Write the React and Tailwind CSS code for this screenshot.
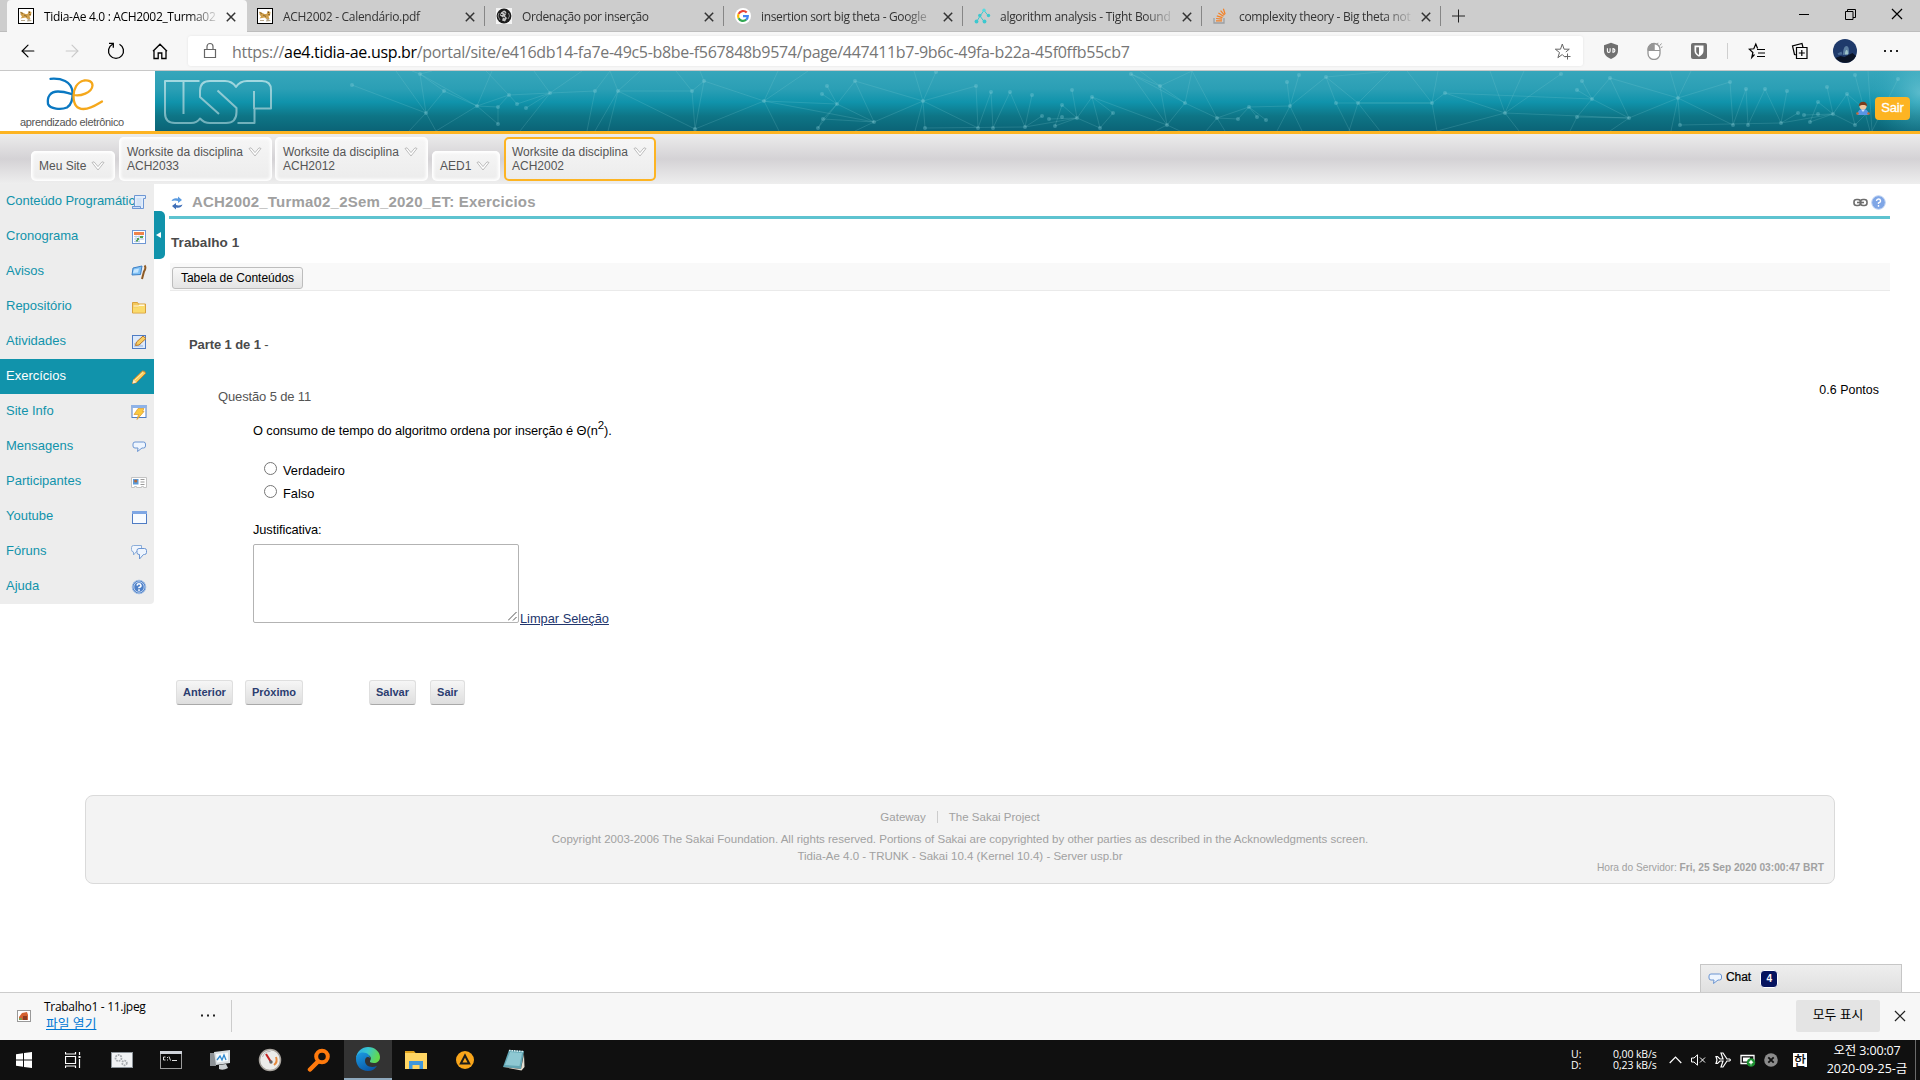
import React from "react";
import { ArrowLeft, ArrowRight } from "lucide-react";

const ui = "font-['Open_Sans','Noto_Sans_CJK_KR',sans-serif]";

/* ---------- favicons ---------- */
const Cat = () => (
  <svg width="16" height="16" viewBox="0 0 16 16">
    <rect x="0.5" y="0.5" width="15" height="15" fill="#fff" stroke="#000" />
    <path d="M2.500 3.500l3 1.500 2 1 2 0 1.500-3 2.500 1-.5 3.500-1.500 1 1 2.500h-3l-2-1.500-2.500.5-2.500.5 1.500-2-1.500-2z" fill="#cf9f4c" />
    <path d="M2.500 4.500l2.500 1M6 7l3 1.500" stroke="#7d5a22" strokeWidth="0.800" fill="none" />
    <path d="M11 3.500l.5 1.500M12.500 6l-1 1" stroke="#5d3d12" fill="none" />
    <path d="M10 10l4 3-5 .5zM3 12h4v1H3z" fill="#b9a98c" />
  </svg>
);
const Gnu = () => (
  <svg width="16" height="16" viewBox="0 0 16 16">
    <rect width="16" height="16" fill="#f4f4f4" />
    <circle cx="8" cy="8" r="7.4" fill="#1c1c1c" />
    <path d="M8 2.500c2 .5 3 2 2 3.500l-1 2 2 2-2 3.500-3-1 1-3-3-2 1-3z" fill="#c4c4c4" />
    <path d="M7.500 4.500l2 1M7 9l2 1M5 6.500h1.500" stroke="#222" />
    <path d="M3 5l-1 3 2 4M12.500 5l1 3-1.500 3" stroke="#888" fill="none" />
  </svg>
);
const Google = () => (
  <svg width="16" height="16" viewBox="0 0 16 16">
    <circle cx="8" cy="8" r="8" fill="#fff" />
    <g fill="none" strokeWidth="2.200">
      <path d="M11.700 4.600A4.900 4.900 0 0 0 3.600 5.900" stroke="#ea4335" />
      <path d="M3.600 5.900a4.900 4.900 0 0 0 0 4.300" stroke="#fbbc05" />
      <path d="M3.600 10.200a4.900 4.900 0 0 0 7.600 1.500" stroke="#34a853" />
      <path d="M11.200 11.700A4.900 4.900 0 0 0 12.800 8.200H8" stroke="#4285f4" />
    </g>
  </svg>
);
const CsSite = () => (
  <svg width="17" height="16" viewBox="0 0 17 16" fill="#3cc8cf" stroke="#3cc8cf">
    <path d="M10 2.500L6 8 2.500 14M6 8l4 5.500M10 2.500L14.500 8" fill="none" strokeWidth="1" />
    <circle cx="10" cy="2.200" r="1.700" stroke="none" fill="#58dbe0" />
    <circle cx="5.800" cy="7.500" r="1.700" stroke="none" />
    <circle cx="14.500" cy="7.500" r="1.700" stroke="none" />
    <circle cx="2.500" cy="13.500" r="1.900" stroke="none" />
    <circle cx="10.500" cy="13.500" r="1.900" stroke="none" />
  </svg>
);
const Stack = () => (
  <svg width="14" height="16" viewBox="0 0 14 16" fill="none">
    <path d="M1 10v5h10v-5" stroke="#9c9fa2" strokeWidth="1.300" />
    <path d="M3 12.800h6M3.100 10.500l6 .6M3.800 7.900l5.700 1.700M5.400 5l5.100 3.200M7.600 2.600l3.800 4.500M10.400.8l1.700 5.500" stroke="#f48024" strokeWidth="1.200" />
  </svg>
);

const fade = "[mask-image:linear-gradient(to_right,#000_144px,transparent_176px)]";
const tabs = [
  { t: "Tidia-Ae 4.0 : ACH2002_Turma02", i: <Cat />, on: true, ls: "tracking-[-0.33px]" },
  { t: "ACH2002 - Calendário.pdf", i: <Cat />, ls: "tracking-[-0.3px]" },
  { t: "Ordenação por inserção", i: <Gnu />, ls: "tracking-[-0.38px]" },
  { t: "insertion sort big theta - Google", i: <Google />, ls: "tracking-[-0.35px]" },
  { t: "algorithm analysis - Tight Bound", i: <CsSite />, ls: "tracking-[-0.28px]" },
  { t: "complexity theory - Big theta not", i: <Stack />, ls: "tracking-[-0.33px]" },
];

const Cross = ({ s = 10, w = 1.5, c = "#333" }) => (
  <svg width={s} height={s} viewBox="0 0 10 10" stroke={c} strokeWidth={w}>
    <path d="M.8.8l8.400 8.400M9.200.8L.8 9.200" />
  </svg>
);

function TabStrip() {
  return (
    <div className="flex h-8 border-b border-[#bdbdbd] bg-[#cdcdcd] pl-[7px]">
      {tabs.map((tab, i) => (
        <div
          key={i}
          className={
            tab.on
              ? "-mb-px -mr-px flex h-8 w-[240px] shrink-0 items-center rounded-t-[4px] bg-[#f7f7f7] pl-[11px]"
              : "flex h-8 w-[239px] shrink-0 items-center pl-[11px]"
          }
        >
          <div className="flex w-[26px] shrink-0">{tab.i}</div>
          <div className={`mt-px w-[176px] shrink-0 whitespace-nowrap text-[12px] leading-[18px] ${tab.ls} ${tab.on ? "text-black" : "text-[#333]"} ${fade}`}>
            {tab.t}
          </div>
          <div className="ml-[6px] mt-px flex shrink-0"><Cross /></div>
          <div className={`ml-auto h-5 w-px ${i === 0 ? "" : "bg-[#868686]"}`} />
        </div>
      ))}
      <svg className="ml-2.5 mt-[9px]" width="14" height="14" stroke="#222"><path d="M7.500 .5v13M1 7h13" /></svg>
      <div className="ml-auto flex h-7 items-center gap-[35px] pr-[17px]">
        <svg width="11" height="11" stroke="#000"><path d="M0 5.500h10" /></svg>
        <svg width="11" height="11" fill="none" stroke="#000"><path d="M.5 2.500h7.500v8H.5zM2.500 2.500V.5h8v8H8" /></svg>
        <Cross s={12} w={1} c="#000" />
      </div>
    </div>
  );
}

function Toolbar() {
  return (
    <div className="flex h-[39px] items-center border-b border-[#c8c8c8] bg-[#f7f7f7] pl-[18px]">
      <ArrowLeft size={20} strokeWidth={1.400} className="text-black" />
      <ArrowRight size={20} strokeWidth={1.300} className="ml-6 text-[#c9c9c9]" />
      <svg className="ml-[24px]" width="20" height="20" viewBox="0 0 20 20" fill="none" stroke="#000" strokeWidth="1.300">
        <path d="M6.500 3.300A7.500 7.500 0 1 0 13.500 3.300M3 2.300h4.300v4.500" />
      </svg>
      <svg className="ml-[24px]" width="20" height="20" viewBox="0 0 20 20" fill="none" stroke="#000" strokeWidth="1.300">
        <path d="M4 9v8.500h4.200V12h3.600v5.500H16V9M3 10.200L10 3.200 17 10.200" />
      </svg>
      <div className="ml-[18px] flex h-[30px] w-[1395px] items-center rounded-[3px] bg-white pl-[14px] pr-[11px] shadow-[0_0_3px_rgba(0,0,0,0.08)]">
        <svg width="16" height="18" viewBox="0 0 16 18" fill="none" stroke="#666" strokeWidth="1.200">
          <path d="M2.500 7.500h11v8h-11zM5 7.500V4.500a3 3 0 0 1 6 0v3" />
        </svg>
        <div className="ml-[14px] mt-px whitespace-nowrap text-[16px] leading-5 tracking-[-0.315px] text-[#767676]">
          https://<span className="text-black">ae4.tidia-ae.usp.br</span>/portal/site/e416db14-fa7e-49c5-b8be-f567848b9574/page/447411b7-9b6c-49fa-b22a-45f0ffb55cb7
        </div>
        <svg className="ml-auto" width="18" height="18" viewBox="0 0 18 18" fill="none" stroke="#666">
          <path d="M11 15.300L8.300 12.500 3.900 15.700 5.500 10.500 1.300 7.200H6.500L8.300 2l1.800 5.200H15.300L11.800 10M13.500 11.500v6M10.500 14.500h6" />
        </svg>
      </div>
      <svg className="ml-[20px]" width="16" height="18" viewBox="0 0 16 18">
        <path d="M8 .8l7 2.400v5.500c0 4-3 6.500-7 8.300-4-1.800-7-4.300-7-8.300V3.200z" fill="#707070" />
        <path d="M4.400 6.300v3c0 1.400 2.700 1.400 2.700 0v-3M10 6.500a1.900 1.900 0 1 1-.1 3.800z" stroke="#fff" fill="none" strokeWidth="1.100" />
      </svg>
      <svg className="ml-[28px]" width="16" height="18" viewBox="0 0 16 18" fill="none" stroke="#969696">
        <path d="M1 7.500a6 6 0 0 1 12 0v4a6 6 0 0 1-12 0z" fill="#fff" strokeWidth="1.300" />
        <path d="M1 8.500V7a6 6 0 0 1 6-5.500v7z" fill="#969696" />
        <path d="M7 1.500V8.500H13" />
        <path d="M10.500 2l.5-1.200M12.800 3.600L14.500 1.500M14 5.500l1.500-.7" />
      </svg>
      <svg className="ml-[27px]" width="18" height="18" viewBox="0 0 18 18">
        <rect x="1" y="1" width="16" height="16" rx="2" fill="#707070" />
        <path d="M4.500 3.500h9v5.500c0 3-2.500 4.700-4.500 5.800-2-1.100-4.500-2.800-4.500-5.800z" fill="#fff" />
        <path d="M6.200 5.200H9v7.800c-1.700-1-2.800-2.200-2.800-3.800z" fill="#707070" />
      </svg>
      <div className="ml-[19px] h-4 w-px bg-[#cfcfcf]" />
      <svg className="ml-[20px]" width="18" height="18" viewBox="0 0 18 18" fill="none" stroke="#000" strokeWidth="1.200">
        <path d="M6.500 12.500L3.800 15.500 4.900 10.500 1.300 7.200l4.500-.4L7.800 2l1.800 4.500M9 7.500h8M10 11h7M9 14.500h8" />
      </svg>
      <svg className="ml-[25px]" width="18" height="18" viewBox="0 0 18 18" fill="none" stroke="#000" strokeWidth="1.200">
        <path d="M5.500 5.500h10.500v11H5.500zM10.800 8v6M7.800 11h6M5.500 13L3.500 12.500 1.500 4 11 1.500l1 4" />
      </svg>
      <svg className="ml-[24px]" width="24" height="24" viewBox="0 0 24 24">
        <circle cx="12" cy="12" r="12" fill="#1f3a6b" />
        <path d="M2.500 19l5-2 4 1 8-4 3.500 3a12 12 0 0 1-20.500 2z" fill="#0b1426" />
        <path d="M10 16c0-5 1-9 3.500-9s2.500 4 2.500 8z" fill="#5c7ea0" />
        <path d="M12 15.500c0-3 .7-4.500 1.700-4.500s1.300 2 1.300 4.500z" fill="#9fc4c8" />
        <path d="M4.500 14.500l4-2 1 3-4 .5z" fill="#4b6c96" />
      </svg>
      <svg className="ml-[27px]" width="16" height="4" fill="#222"><path d="M0 1h2v2H0zM6 1h2v2H6zM12 1h2v2h-2z" /></svg>
    </div>
  );
}

/* ---------- site banner ---------- */
const nodes = "352,85 426,113 444,91 420,74 477,106 509,95 498,107 517,104 526,108 498,124 550,93 595,91 618,91 692,91 704,81 695,129 764,101 837,104 822,94 827,86 823,119 818,128 855,81 874,122 923,101 925,128 936,72 976,86 991,92 1010,92 1032,95 978,128 993,128 1025,127 1042,116 1049,119 1062,105 1062,117 1055,126 1072,90 1077,118 1092,97 1113,113 1100,128 1131,74 1160,86 1185,103 1167,125 1217,118 1238,119 1249,107 1257,117 1266,120 1287,82 1299,75 1290,106 1326,77 1336,103 1358,103 1432,103 1445,93 1505,113 1561,74 1577,90 1582,81 1592,99 1577,117 1610,78 1629,118 1678,98 1680,125 1730,82 1746,89 1765,89 1787,91 1733,125 1748,125 1781,123 1798,113 1804,115 1818,102 1818,114 1810,122 1827,87 1833,114 1847,94 1855,75 1898,79 1855,125";
const mesh =
  "M352 85L426 113 444 91 420 74 426 113 409 131M396 71L426 113 436 131M412 71L420 74 432 71M444 91L477 106 509 95 498 107 477 106 498 124V107M477 106L436 131M477 106L492 71M420 74L477 106M509 95L486 71M509 95L550 93 517 104 509 95M550 93L526 108M550 93L534 71M550 93L582 71M550 93L520 131M550 93L595 91 587 131M595 91L610 71 618 91 595 131M618 91L608 131M618 91L640 71M618 91L692 91 676 71M618 91L695 129 692 91 704 81 695 129 764 101 704 81M704 81L700 71M764 101L778 71M764 101L808 71M764 101L779 131M764 101L837 104 822 94M837 104L827 86M837 104L823 119 818 128 837 104 855 81 923 101 976 86 978 128 923 101 925 128 1025 127M764 101L874 122 823 119M837 104L874 122 923 101 936 72M923 101L914 71M855 81L874 122 855 131M923 101L915 131M991 92L978 128M991 92L993 128 1010 92 1025 127 1032 95M1025 127L1077 118 1049 119M1025 127L1042 116M1055 126L1062 105 1077 118 1092 97 1113 113 1100 128 1077 118 1055 126M1072 90L1077 118M1092 97L1100 128M1092 97L1167 125 1131 74 1160 86 1140 71M1160 86L1192 71 1185 103 1160 86 1167 125 1185 103 1217 118 1192 71M1131 74L1185 103M1167 125L1155 131M1167 125L1180 131M1217 118L1249 107 1257 117M1217 118L1238 119 1249 107 1290 106 1287 82M1217 118L1206 131M1217 118L1225 131M1249 107L1266 120M1290 106L1299 75M1290 106L1326 77 1336 103 1350 131M1290 106L1302 131M1290 106L1277 131M1326 77L1358 103 1432 103 1407 71M1326 77L1390 71 1358 103 1380 131M1358 103L1349 131M1336 103L1432 103 1445 93 1505 113 1524 71M1432 103L1438 71M1432 103L1437 131 1505 113 1561 74M1505 113L1519 131M1505 113L1490 71M1505 113L1629 118 1577 117M1445 93L1592 99 1577 90M1582 81L1592 99 1610 78 1678 98 1730 82 1733 125 1678 98 1680 125 1781 123M1592 99L1577 117 1570 131M1592 99L1629 118 1678 98 1691 71M1610 78L1629 118 1610 131M1678 98L1670 71M1678 98L1671 131M1746 89L1733 125M1746 89L1748 125 1765 89 1781 123 1787 91M1781 123L1833 114 1804 115M1781 123L1798 113M1810 122L1818 102 1833 114 1847 94 1868 112 1855 125 1833 114 1810 122M1827 87L1833 114M1847 94L1855 125M1855 75L1870 131M1868 71L1872 131 1898 79";

function Banner() {
  return (
    <div className="flex h-[63px] border-b-[3px] border-[#fdb422]">
      <div className="flex w-[155px] shrink-0 flex-col bg-white pt-1">
        <svg className="ml-[44px]" width="62" height="38" viewBox="44 75 62 38" fill="none" strokeWidth="2.300" strokeLinecap="round">
          <path d="M50.500 78.800C61 78 71.500 81 72.500 92C73 100 71 105 67 107.500C61 110 50 109 48 104C47 97 50 91.500 58 91.500C64 91.500 68 93 73 94.500" stroke="#0a78c2" />
          <path d="M73.500 95C80 96.500 92 93 92.500 85.500C92.500 81 88 80 84 80.500C77 82 73.500 89 73.500 96C73.500 105 77 109 83.500 109C91 109 97 104.500 102 101.500" stroke="#f5a81c" />
        </svg>
        <div className="ml-5 mt-[2px] whitespace-nowrap text-[11px] leading-[14px] tracking-[-0.34px] text-[#555]">aprendizado eletrônico</div>
      </div>
      <div className="relative flex grow items-center justify-end bg-[linear-gradient(#37a6bb,#2b9fb5_30%,#1093ab_52%,#0e7586_75%,#0b6376)] pr-[10px] pt-[14px]">
        <svg className="absolute inset-0" width="1765" height="60" viewBox="155 71 1765 60">
          <defs>
            <radialGradient id="glow"><stop offset="0" stopColor="#7fd0dd" stopOpacity="0.600" /><stop offset="1" stopColor="#2aa5bb" stopOpacity="0" /></radialGradient>
            <linearGradient id="usp" x1="0" y1="79" x2="0" y2="124" gradientUnits="userSpaceOnUse"><stop offset="0" stopColor="#a4dae2" /><stop offset="1" stopColor="#6fafba" /></linearGradient>
          </defs>
          <ellipse cx="1920" cy="93" rx="52" ry="55" fill="url(#glow)" />
          <path d={mesh} fill="none" stroke="#8fd4dc" strokeOpacity="0.190" />
          <g fill="#8fd4dc" fillOpacity="0.320">
            {nodes.split(" ").map((n, i) => {
              const [x, y] = n.split(",");
              return <circle key={i} cx={x} cy={y} r="2" />;
            })}
          </g>
          <g fill="none" stroke="url(#usp)" strokeWidth="2" strokeLinejoin="round">
            <path d="M199.500 81H165V113Q165 123 175 123H191Q197 123 200 118.500Q204 123 210 123H226Q236.500 123 236.500 112V108L217.500 90.500" />
            <path d="M183.500 82V114" />
            <path d="M219 114L200 97V91Q200 81 210 81H225Q232 81 236 87Q240 81 247 81H262Q271 81 271 90V108.500H254.500V123H237.500" />
            <path d="M254 91V109" />
          </g>
        </svg>
        <svg className="relative" width="14" height="15" viewBox="0 0 14 15">
          <path d="M1.500 14c0-4 2-6 5.500-6s5.500 2 5.500 6z" fill="#5a95e6" />
          <path d="M5 8.500h4L7 11z" fill="#cfe3fa" />
          <circle cx="7" cy="5" r="3.600" fill="#f0c69c" />
          <path d="M2.800 5.500c-.5-6.500 9-6.500 8.400 0-1-2-7-2-8.400 0z" fill="#7a3d1d" />
          <circle cx="1.500" cy="12.500" r="1.300" fill="#c96a3b" /><circle cx="12.500" cy="12.500" r="1.300" fill="#c96a3b" />
        </svg>
        <div className="relative ml-[5px] flex h-[23px] w-[35px] items-center justify-center rounded bg-[#fdb422] text-[13px] tracking-[-0.2px] text-white [-webkit-text-stroke:0.3px_#fff]">Sair</div>
      </div>
    </div>
  );
}

const Chev = () => (
  <svg width="14" height="10" viewBox="0 0 14 10" fill="#fff" stroke="#b5b5b5" strokeWidth="0.900">
    <path d="M1 1.500L3 .8l4 4.800L11 .8l2 .7-6 7.500z" />
  </svg>
);
const siteTabs = [
  { a: "Meu Site", c: "ml-[31px] h-[30px] w-[84px]" },
  { a: "Worksite da disciplina", b: "ACH2033", c: "ml-[4px] h-[44px] w-[153px]" },
  { a: "Worksite da disciplina", b: "ACH2012", c: "ml-[3px] h-[44px] w-[153px]" },
  { a: "AED1", c: "ml-[4px] h-[30px] w-[68px]" },
  { a: "Worksite da disciplina", b: "ACH2002", c: "ml-[4px] h-[44px] w-[152px]", on: true },
];
function SiteTabs() {
  return (
    <div className="flex h-[50px] items-end bg-[linear-gradient(#ececec,#d4d2d5_50%,#eeeeee)] pb-[3px] text-[12px] leading-[14px] text-[#555]">
      {siteTabs.map((s, i) => (
        <div
          key={i}
          className={`${s.c} flex shrink-0 flex-col justify-center whitespace-nowrap rounded-[5px] bg-[linear-gradient(#f6f6f6,#ececec)] ${
            s.on ? "border-2 border-[#fdb422] pl-[6px]" : "pl-2 shadow-[inset_0_0_3px_2px_#fff]"
          }`}
        >
          <div className="flex items-center">
            {s.a}
            <span className="ml-[5px]"><Chev /></span>
          </div>
          {s.b && <div>{s.b}</div>}
        </div>
      ))}
    </div>
  );
}

/* ---------- sidebar ---------- */
const S = ({ children }) => <svg className="shrink-0" width="16" height="16" viewBox="0 0 16 16">{children}</svg>;
const Bubble = () => (
  <path d="M4 3h8.500q2 0 2 2v2q0 2-2 2H11L6.500 12.500 7 9H4Q2 9 2 7V5q0-2 2-2z" fill="#eef5fe" stroke="#6b95d2" />
);
const menu = [
  ["Conteúdo Programátic", <S><path d="M3.500 1.500h11v3h-2v10H1.500v-2h2z" fill="#e3eefb" stroke="#6e97d4" /><path d="M5.500 5h5M5.500 7h5M5.500 9h5M5.500 11h5" stroke="#c3d7f0" /><path d="M1.500 12.500h8v2h-8z" fill="#cbdef7" stroke="#6e97d4" /></S>],
  ["Cronograma", <S><rect x="1.500" y="1.500" width="13" height="13" fill="#fff" stroke="#6e97d4" /><path d="M3 3h10v3H3z" fill="#f0834b" /><path d="M3 7.500h10M3 10h10M3 12.500h6M5 6.500v7M8 6.500v7M11 6.500v4" stroke="#b9cce8" /><path d="M6 9h2v2H6zM9 7h3v2H9zM5 11h2v1.500H5z" fill="#55a04e" /></S>],
  ["Avisos", <S><path d="M2 4l9-2-1.500 8.500-8.500.500z" fill="#7fc1f5" stroke="#3d7fc4" /><path d="M3 5.500l5-1-1 4-5 .5z" fill="#c6e6ff" /><path d="M13.500 1.500q2 2-.5 6l-2 7.500" stroke="#8d5a25" strokeWidth="2" fill="none" /></S>],
  ["Repositório", <S><path d="M1.500 3.500h5l1 1.500h7v9h-13z" fill="#f4c95c" stroke="#d9a13c" /><path d="M2.500 6.500h5l1-1h5v2h-11z" fill="#fff9e0" /><path d="M2 8.500h5l1-1.500h6v6.500H2z" fill="#fadb6c" /></S>],
  ["Atividades", <S><rect x="1.500" y="1.500" width="13" height="13" fill="#ddeafb" stroke="#4f7cc4" /><path d="M3 10h7M3 12h9" stroke="#8fb1e0" /><path d="M4.500 11.500l1-3.500 6.500-6 3 2.500-7 6.500z" fill="#f6cd62" stroke="#b9772a" /></S>],
  ["Exercícios", <S><path d="M1.500 14.500l1-4 9-8.500q3-.5 3 2.500l-9 9z" fill="#f8cf5d" stroke="#c4832e" /><path d="M1.500 14.500l1-4 3 3z" fill="#fbe9c8" /><path d="M4 11l8-7.500" stroke="#fff0b0" /></S>],
  ["Site Info", <S><rect x="1" y="1.500" width="14" height="12" fill="#fff" stroke="#4f7cc4" /><path d="M.5 1h15v3H.5z" fill="#8db2e8" /><path d="M7 4.500h6l-1.500 3H13l-7 8 1.500-5H3z" fill="#fbc93f" stroke="#d9962b" strokeWidth="0.700" /></S>],
  ["Mensagens", <S><Bubble /></S>],
  ["Participantes", <S><path d="M.5 3.500h15v10h-3v-1h-2v1h-5v-1h-2v1h-3z" fill="#fff" stroke="#c3c3c3" /><rect x="2" y="5" width="5.500" height="5.500" fill="#5c9bd9" /><circle cx="4.700" cy="7" r="1.600" fill="#b3693a" /><path d="M9.500 5.500h4M9.500 8h4M9.500 10.500h4" stroke="#9a9a9a" /></S>],
  ["Youtube", <S><rect x="1.500" y="2.500" width="14" height="12" fill="#f8fbff" stroke="#4f7cc4" /><path d="M1 2h15v3H1z" fill="#7fa7e4" /></S>],
  ["Fóruns", <S><path d="M2.500 1.500h8v6h-5l-3 3.500V8Q.5 8 .5 5.500V3.500q0-2 2-2z" fill="#f0f5fc" stroke="#8badd9" /><path d="M8 4.500h5.500q2 0 2 2v2q0 2-2 2h-1L8.500 15v-4.500H8q-2 0-2-2v-2q0-2 2-2z" fill="#eef5fe" stroke="#6b95d2" /></S>],
  ["Ajuda", <S><circle cx="8" cy="8" r="6.800" fill="#4e80c8" stroke="#a3bfe3" /><circle cx="8" cy="8" r="5.200" fill="none" stroke="#d5e4f7" strokeWidth="0.800" /><path d="M6 6.500q.3-1.700 2-1.700t2 1.500-2 2.200v.8M8 10.300v1.600" stroke="#fff" strokeWidth="1.500" fill="none" /></S>],
];

function Sidebar() {
  return (
    <div className="h-[420px] w-[154px] shrink-0 overflow-hidden rounded-br bg-[#ededed]">
      {menu.map(([t, icon], i) => (
        <div key={t} className={`flex h-[35px] items-center pl-[6px] text-[13px] ${i === 5 ? "bg-[#1193ab] text-white" : "text-[#1193ab]"}`}>
          <div className={`-mt-px w-[125px] shrink-0 whitespace-nowrap ${i === 0 ? "tracking-[-0.06px]" : ""}`}>{t}</div>
          <div className="relative flex">{icon}</div>
        </div>
      ))}
    </div>
  );
}

const Btn = ({ c, children }) => (
  <button className={`${c} flex h-[25px] items-center justify-center rounded-[3px] border border-[#dfdfdf] border-b-[#a9a9a9] bg-[linear-gradient(#f6f6f6,#dedede)] pb-px text-[11px] font-bold text-[#2b3d70]`}>
    {children}
  </button>
);

const Radio = ({ label }) => (
  <div className="flex h-[23px] items-center">
    <div className="-mt-[4px] size-[13px] rounded-full border border-[#767676] bg-white" />
    <span className="ml-[6px]">{label}</span>
  </div>
);

function Content() {
  return (
    <div className="flex grow flex-col pl-[4px] pr-[30px] text-black">
      <div className="flex h-[35px] items-center border-b-[3px] border-[#5ec3d0] pl-[2px]">
        <svg className="mt-[6px]" width="12" height="14" viewBox="0 0 12 14">
          <path d="M.5 5Q2 1.500 7 2.500V.5l4 3.500-4 3V5Q4 4 .5 5z" fill="#5b9be0" />
          <path d="M11.500 8.500Q10 12.500 5 11.500v2L1 10l4-3v2q3 1 6.500-.5z" fill="#3f6fb8" />
        </svg>
        <div className="ml-[9px] mt-[5px] text-[15px] font-bold tracking-[0.2px] text-[#a0a0a0]">ACH2002_Turma02_2Sem_2020_ET: Exercicios</div>
        <svg className="ml-auto mt-[5px]" width="15" height="9" viewBox="0 0 15 9" fill="none" stroke="#6d6d6d" strokeWidth="1.600">
          <rect x="1" y="1.500" width="6.500" height="6" rx="2.500" /><rect x="7.500" y="1.500" width="6.500" height="6" rx="2.500" /><path d="M4 4.500h7" />
        </svg>
        <svg className="ml-[3px] mr-[4px] mt-[5px]" width="15" height="15" viewBox="0 0 15 15">
          <circle cx="7.500" cy="7.500" r="6.800" fill="#7fa6e6" stroke="#bfd3f3" /><path d="M5.500 6Q5.700 4 7.500 4t2 1.700-2 2.300v1M7.500 10v1.800" stroke="#fff" strokeWidth="1.400" fill="none" />
        </svg>
      </div>
      <div className="ml-[2px] mt-[15px] h-[18px] text-[13.500px] font-bold leading-[18px] tracking-[0.08px] text-[#4a4a4a]">Trabalho 1</div>
      <div className="ml-px mt-[11px] flex h-[28px] items-center border-b border-[#eaeaea] bg-[#f9f9f9] pl-[2px] pt-[2px]">
        <button className="flex h-[22px] w-[131px] items-center justify-center rounded-[3px] border border-[#bdbdbd] bg-[linear-gradient(#f8f8f8,#e4e4e4)] text-[12px] tracking-[-0.02px]">Tabela de Conteúdos</button>
      </div>
      <div className="ml-[20px] mt-[45px] h-[18px] text-[13px] leading-[18px] tracking-[-0.1px] text-[#4a4a4a]"><b>Parte 1 de 1</b> -</div>
      <div className="ml-[49px] mr-[11px] mt-[25px] flex h-[35px] justify-between">
        <span className="mt-[9px] text-[13px] leading-[18px] tracking-[-0.14px] text-[#555]">Questão 5 de 11</span>
        <span className="mt-[2px] text-[12.400px] leading-[18px] tracking-[0.04px]">0.6 Pontos</span>
      </div>
      <div className="ml-[84px] mt-[7px] h-[20px] text-[12.800px] leading-[20px] tracking-[-0.08px]">
        O consumo de tempo do algoritmo ordena por inserção é Θ(n<sup className="text-[11.500px] leading-none">2</sup>).
      </div>
      <div className="ml-[95px] mt-[18px] text-[12.800px] leading-[18px]">
        <Radio label="Verdadeiro" />
        <Radio label="Falso" />
      </div>
      <div className="ml-[84px] mt-[16px] text-[12.800px] leading-[18px] tracking-[-0.08px]">Justificativa:</div>
      <div className="ml-[84px] mt-[5px] flex h-[84px] items-start">
        <div className="flex h-[79px] w-[266px] items-end justify-end rounded-[2px] border border-[#b3b3b3] bg-white p-px">
          <svg width="9" height="9" stroke="#555"><path d="M0 8.500L8.500 0M5 8.500L8.500 5" /></svg>
        </div>
        <span className="ml-px mt-[66px] text-[12.800px] leading-[18px] text-[#22366d] underline">Limpar Seleção</span>
      </div>
      <div className="ml-[7px] mt-[52px] flex">
        <Btn c="w-[57px]">Anterior</Btn>
        <Btn c="ml-[12px] w-[58px]">Próximo</Btn>
        <Btn c="ml-[66px] w-[47px]">Salvar</Btn>
        <Btn c="ml-[14px] w-[35px]">Sair</Btn>
      </div>
    </div>
  );
}

function Footer() {
  return (
    <div className="ml-[85px] mt-[90px] flex h-[89px] w-[1750px] flex-col items-center rounded-lg border border-[#dadada] bg-[#f3f3f3] text-[11.520px] leading-[17px] text-[#a1a1a1]">
      <div className="mt-[13px] flex">
        <span>Gateway</span>
        <span className="mx-[11px] mt-[2px] h-3 w-px bg-[#ccc]" />
        <span>The Sakai Project</span>
      </div>
      <div className="mt-[5px]">Copyright 2003-2006 The Sakai Foundation. All rights reserved. Portions of Sakai are copyrighted by other parties as described in the Acknowledgments screen.</div>
      <div>Tidia-Ae 4.0 - TRUNK - Sakai 10.4 (Kernel 10.4) - Server usp.br</div>
      <div className="-mt-[3px] mr-[10px] self-end text-[10.200px] leading-[12px]">Hora do Servidor: <b>Fri, 25 Sep 2020 03:00:47 BRT</b></div>
    </div>
  );
}

function DownloadBar() {
  return (
    <div className={`flex h-12 items-center border-t border-[#cccccc] bg-[#f7f7f7] pl-[17px] ${ui}`}>
      <svg className="-mt-0.5" width="14" height="12"><rect x="0.500" y="0.500" width="13" height="11" fill="#fff" stroke="#999" /><path d="M2 7l3-4 5-1 1 3v5H2z" fill="#d4602f" /><path d="M2 8h3v2H2z" fill="#7c9a4e" /><path d="M6 6h4v4H6z" fill="#8c3c22" /></svg>
      <div className="-mt-[3px] ml-[13px] w-[156px]">
        <div className="text-[12px] leading-[17px] tracking-[-0.3px] text-black">Trabalho1 - 11.jpeg</div>
        <div className="ml-[2px] text-[12.800px] leading-[17px] text-[#0078d4] underline">파일 열기</div>
      </div>
      <svg className="-mt-0.5 ml-px" width="16" height="3" fill="#222"><path d="M0 .5h2v2H0zM6 .5h2v2H6zM12 .5h2v2h-2z" /></svg>
      <div className="-mt-0.5 ml-[14px] h-8 w-px bg-[#ccc]" />
      <div className="-mt-px ml-auto flex h-8 w-[84px] items-center justify-center rounded-[2px] bg-[#e4e4e4] pb-[3px] text-[12.800px] text-black">모두 표시</div>
      <div className="-mt-0.5 ml-[14px] mr-[14px]"><Cross s={12} w={1} c="#222" /></div>
    </div>
  );
}

const appIcons = [
  <svg width="16" height="16" fill="#fff"><path d="M0 2.200L7 1.200V7.500H0zM8 1L16 0V7.500H8zM0 8.500h7v6.300L0 13.800zM8 8.500h8V16L8 15z" /></svg>,
  <svg width="16" height="16" fill="none" stroke="#fff" strokeWidth="1.200"><path d="M.5 4.500h10v7H.5zM.5 0v2h10V0M.5 16v-2h10v2M14.500 0v3M14.500 7v9" /><path d="M13.500 4h2v2h-2z" fill="#fff" stroke="none" /></svg>,
  <svg width="22" height="16"><rect x="0.500" y="0.500" width="21" height="15" fill="#f1f3f5" stroke="#8d949a" /><g fill="none" stroke="#a9adb1" strokeWidth="1.800"><circle cx="7.500" cy="6" r="3" strokeDasharray="1.800 0.800" /><circle cx="13.500" cy="11" r="2.300" strokeDasharray="1.600 0.800" /></g></svg>,
  <svg width="22" height="18"><rect x="0.500" y="0.500" width="21" height="17" fill="#0a0a0a" stroke="#9a9a9a" /><path d="M0 0h22v3H0z" fill="#cfd3da" /><path d="M5.500 6h-2v3h2M7.500 6v1M7.500 8.500v1M9 5.500l1.500 4M12 9.500h5" stroke="#ddd" fill="none" /></svg>,
  <svg width="24" height="22"><path d="M1 4h6v13H1z" fill="#8d9296" /><path d="M5 3l16-2v13L7 16z" fill="#d7dde0" /><path d="M7 5l12-1.500v8.500L8 13.500z" fill="#f5fafc" /><path d="M8 11l3-4 2 4 2-5 2 5" stroke="#2c88d0" fill="none" strokeWidth="1.300" /><path d="M10 16l7-1 2 4q-5 3-9 1z" fill="#c9ced1" /></svg>,
  <svg width="24" height="24"><circle cx="12" cy="12" r="10.500" fill="#ececea" stroke="#a9a49e" strokeWidth="1.500" /><path d="M4.500 9a8 8 0 0 1 8-5.500" stroke="#b5b5b5" fill="none" /><path d="M8 6l5 8" stroke="#c32020" strokeWidth="2" /><path d="M18 9q2 5-2 8" stroke="#e88a3c" strokeWidth="2" fill="none" /><circle cx="13" cy="14" r="1.700" fill="#666" /></svg>,
  <svg width="24" height="24" fill="none" stroke="#ff7a0d"><circle cx="15" cy="8.500" r="5.800" strokeWidth="4" /><path d="M10.500 14L3 21.500" strokeWidth="4.500" strokeLinecap="round" /></svg>,
  <svg width="24" height="24" viewBox="0 0 24 24"><defs><linearGradient id="e1" x1="0" y1="0" x2="1" y2="0.300"><stop offset="0" stopColor="#2aa6e8" /><stop offset="0.500" stopColor="#38c6d0" /><stop offset="1" stopColor="#62d94e" /></linearGradient><linearGradient id="e2" x1="0" y1="0" x2="0.600" y2="1"><stop offset="0" stopColor="#1b9de2" /><stop offset="1" stopColor="#0b58a8" /></linearGradient></defs><path d="M0 11C1 4 6 0 12 0c7 0 12 5 12 10 0 4-3 6-6 6-3 0-4.500-1-4-2 2-3 .5-6-3.500-6C6 8 1 9 0 11z" fill="url(#e1)" /><path d="M0 12C0 8 3 5.500 7 5.500c4.500 0 7 3 7 5.500-2-2-5-1-5 3 0 4.500 5 7.500 12 5-2 3-5 5-9 5C5 24 0 19 0 12z" fill="url(#e2)" /></svg>,
  <svg width="22" height="18"><path d="M0 0h9l2 2.500H0z" fill="#e0a21c" /><path d="M0 2h22v16H0z" fill="#ffd563" /><path d="M4 10h14v8h-3.500v-4h-7v4H4z" fill="#3f97dc" /></svg>,
  <svg width="18" height="18"><circle cx="9" cy="9" r="9" fill="#f9a51a" /><path d="M9 4.500l4.200 8H4.800z" fill="none" stroke="#1b1b1b" strokeWidth="2" /></svg>,
  <svg width="24" height="22"><path d="M7 1l15 1-3 18L1 18z" fill="#62a6b4" /><path d="M8 3l12 1-2.500 13L3 16z" fill="#8ec8d2" /><path d="M1 18l18 2 3-15 .5 13-3 3.500z" fill="#e5e0d3" /><path d="M7 1.500l14 1" stroke="#d8eef1" strokeWidth="1.500" strokeDasharray="1.500 1" /></svg>,
];

function Taskbar() {
  return (
    <div className={`flex h-10 items-center bg-[#101010] text-white ${ui}`}>
      {appIcons.map((ic, i) => (
        <div key={i} className={`flex h-10 shrink-0 items-center justify-center ${i === 0 ? "w-12" : i === 7 ? "w-12 border-b-2 border-[#8fa9bd] bg-[#333333]" : i < 7 ? "w-[49.330px]" : "w-[48.700px]"}`}>{ic}</div>
      ))}
      <div className="ml-auto flex items-center">
        <div className="w-[42px] text-[10.500px] leading-[11px]">U:<br />D:</div>
        <div className="w-[48px] whitespace-nowrap text-[10.500px] leading-[11px] tracking-[-0.1px]">0,00 kB/s<br />0,23 kB/s</div>
        <svg className="ml-[8px]" width="13" height="8" fill="none" stroke="#fff" strokeWidth="1.200"><path d="M.7 7L6.500 1l5.800 6" /></svg>
        <svg className="ml-[9px]" width="15" height="12" fill="none" stroke="#fff"><path d="M.5 4h2.500L6.500.8v10.400L3 8H.5zM9 3.500l5 5M14 3.500l-5 5" /></svg>
        <svg className="ml-[9px]" width="17" height="16" fill="none" stroke="#fff" strokeWidth="1.200"><path d="M1 4.500h1.500L5 7h3L6 1h2l4 6h2.500q1.800 1 0 2H12l-4 6H6l2-6H5l-2.500 2.500H1L2 8z" /></svg>
        <svg className="ml-[8px]" width="16" height="14"><path d="M1 2.500h13v8H1z" fill="none" stroke="#fff" strokeWidth="1.300" /><path d="M3 4.500h7v4H3z" fill="#fff" /><circle cx="11" cy="9.500" r="4.300" fill="#1b8f2f" /><path d="M11 7.200l2 2.300-2 1-2-1zM11 10v2.500" fill="#fff" stroke="#fff" strokeWidth="0.600" /></svg>
        <svg className="ml-[8px]" width="14" height="14"><circle cx="7" cy="7" r="6.800" fill="#8b8b8b" /><path d="M4.300 4.300l5.400 5.400M9.700 4.300L4.300 9.700" stroke="#101010" strokeWidth="1.800" /></svg>
        <div className="ml-[15px] flex size-[14px] items-center justify-center bg-white pb-px text-[13px] font-medium leading-[14px] text-[#101010]">한</div>
        <div className="ml-[14px] w-[92px] text-center text-[12.500px] leading-[18px]">
          <div className="tracking-[-0.15px]">오전 3:00:07</div>
          <div className="whitespace-nowrap">2020-09-25-금</div>
        </div>
        <div className="ml-[2px] mr-1 h-10 w-px bg-[#6a6a6a]" />
      </div>
    </div>
  );
}

export default function App() {
  return (
    <div className="flex h-[1080px] w-[1920px] flex-col overflow-hidden bg-white font-['Liberation_Sans','Noto_Sans_CJK_KR',sans-serif]">
      <div className={ui}>
        <TabStrip />
        <Toolbar />
      </div>
      <Banner />
      <SiteTabs />
      <div className="flex">
        <Sidebar />
        <div className="mt-[27px] flex h-12 w-[11px] shrink-0 items-center justify-center rounded-r-[5px] bg-[#1193ab] pr-[3px]">
          <svg width="5" height="6" fill="#fff"><path d="M5 0v6L0 3z" /></svg>
        </div>
        <Content />
      </div>
      <Footer />
      <div className="mt-auto flex justify-end pr-[18px]">
        <div className="flex h-7 w-[202px] items-center border border-b-0 border-[#c6c6c6] bg-[linear-gradient(#eeeeee,#e0e0e0)] pl-[6px]">
          <S><Bubble /></S>
          <span className="-mt-1 ml-[3px] text-[12px] tracking-[-0.05px] [-webkit-text-stroke:0.2px_#000]">Chat</span>
          <span className="ml-[9px] flex size-[18px] items-center justify-center rounded-[4px] border border-white bg-[#061460] text-[10px] font-bold text-white">4</span>
        </div>
      </div>
      <DownloadBar />
      <Taskbar />
    </div>
  );
}
